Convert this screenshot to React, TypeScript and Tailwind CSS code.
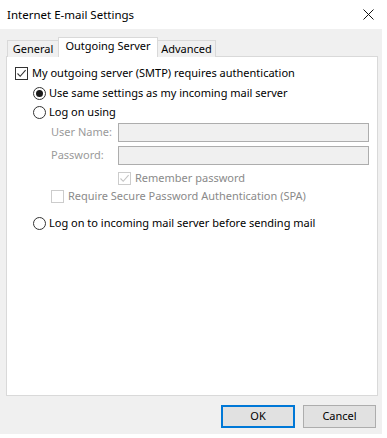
import React from 'react'

const font = { fontFamily: '"Noto Sans", "Open Sans", Arial, sans-serif' }

function CheckBox({ checked, disabled }: { checked?: boolean; disabled?: boolean }) {
  const stroke = disabled ? '#c4c4c4' : '#333333'
  return (
    <span className={`flex h-[13px] w-[13px] shrink-0 items-center justify-center border bg-white ${disabled ? 'border-[#cccccc]' : 'border-[#333333]'}`}>
      {checked && (
        <svg width="11" height="11" viewBox="0 0 11 11">
          <path d="M1.5 5.5 L4.2 8.3 L9.6 2.2" fill="none" stroke={stroke} strokeWidth="1.1" />
        </svg>
      )}
    </span>
  )
}

function Radio({ checked }: { checked?: boolean }) {
  return (
    <span className="flex h-[13px] w-[13px] shrink-0 items-center justify-center rounded-full border border-[#333333] bg-white">
      {checked && <span className="h-[7px] w-[7px] rounded-full bg-[#1a1a1a]" />}
    </span>
  )
}

export default function App() {
  return (
    <div className="h-[438px] w-[387px] overflow-hidden bg-white text-[11px] text-black" style={font}>
      <div className="flex h-[438px] w-[382px] flex-col">
        {/* Title bar */}
        <div className="flex h-[29px] shrink-0 items-center justify-between bg-white pl-[7px] pr-[8px]">
          <span className="text-[11.5px] leading-none">Internet E-mail Settings</span>
          <svg width="11" height="11" viewBox="0 0 11 11">
            <path d="M0.5 0.5 L10.5 10.5 M10.5 0.5 L0.5 10.5" stroke="#111" strokeWidth="1" />
          </svg>
        </div>

        {/* Body */}
        <div className="flex h-[405px] flex-col bg-[#f0f0f0] px-[6px]">
          {/* Tabs */}
          <div className="relative z-10 mt-[8px] flex h-[20px] items-end pl-px">
            <div className="-mr-px flex h-[17px] w-[52px] items-center justify-center border border-b-0 border-[#d9d9d9] bg-[#f0f0f0] pt-px">General</div>
            <div className="flex h-[20px] w-[100px] items-center justify-center border border-b-0 border-[#d9d9d9] bg-white pb-[2px]">Outgoing Server</div>
            <div className="-ml-px flex h-[17px] w-[59px] items-center justify-center border border-b-0 border-[#d9d9d9] bg-[#f0f0f0] pt-px">Advanced</div>
          </div>

          {/* Panel */}
          <div className="-mt-px flex h-[340px] w-[372px] flex-col border border-[#d9d9d9] bg-white">
            <div className="mt-[7px] flex h-[18px] items-center gap-[4px] pl-[8px]">
              <CheckBox checked />
              <span>My outgoing server (SMTP) requires authentication</span>
            </div>
            <div className="mt-[2px] flex h-[18px] items-center gap-[3px] pl-[26px]">
              <Radio checked />
              <span>Use same settings as my incoming mail server</span>
            </div>
            <div className="mt-px flex h-[18px] items-center gap-[3px] pl-[26px]">
              <Radio />
              <span>Log on using</span>
            </div>
            <div className="mt-[2px] flex h-[19px] items-center pl-[44px]">
              <span className="w-[67px] text-[#9a9a9a]">User Name:</span>
              <div className="h-[19px] w-[251px] border border-[#adadad] bg-[#f0f0f0]" />
            </div>
            <div className="mt-[4px] flex h-[19px] items-center pl-[44px]">
              <span className="w-[67px] text-[#9a9a9a]">Password:</span>
              <div className="h-[19px] w-[251px] border border-[#adadad] bg-[#f0f0f0]" />
            </div>
            <div className="mt-[4px] flex h-[18px] items-center gap-[4px] pl-[111px] text-[#8a8a8a]">
              <CheckBox checked disabled />
              <span>Remember password</span>
            </div>
            <div className="flex h-[18px] items-center gap-[4px] pl-[44px] text-[#8a8a8a]">
              <CheckBox disabled />
              <span>Require Secure Password Authentication (SPA)</span>
            </div>
            <div className="mt-[9px] flex h-[18px] items-center gap-[3px] pl-[26px]">
              <Radio />
              <span>Log on to incoming mail server before sending mail</span>
            </div>
          </div>

          {/* Buttons */}
          <div className="mt-[9px] flex justify-end gap-[8px]">
            <button className="flex h-[23px] w-[74px] items-center justify-center border-2 border-[#0078d7] bg-[#e1e1e1]">OK</button>
            <button className="flex h-[23px] w-[73px] items-center justify-center border border-[#adadad] bg-[#e1e1e1]">Cancel</button>
          </div>
        </div>
      </div>
    </div>
  )
}
